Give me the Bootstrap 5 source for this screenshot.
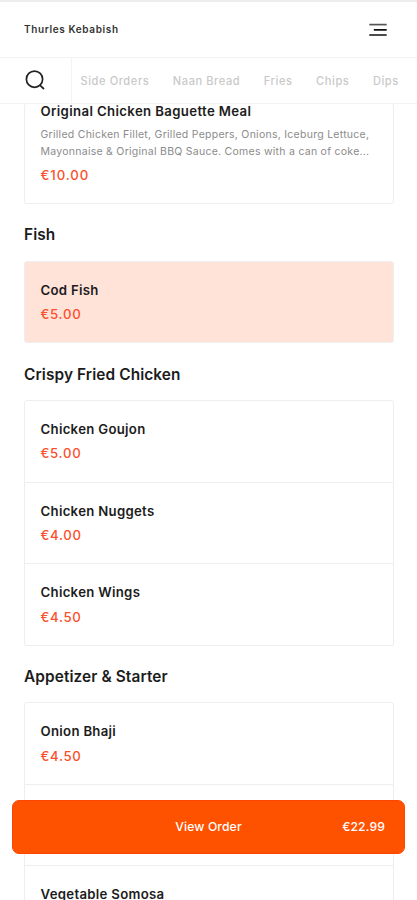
<!DOCTYPE html>
<html lang="en">
<head>
<meta charset="utf-8">
<meta name="viewport" content="width=device-width, initial-scale=1">
<title>Thurles Kebabish</title>
<link href="https://cdn.jsdelivr.net/npm/bootstrap@5.3.0/dist/css/bootstrap.min.css" rel="stylesheet">
<style>
  body { font-family: Inter, "Liberation Sans", sans-serif; color: #1c1c1c; background: #fff; }
  .top-bar { height: 58px; padding: 0 30px 0 24px; border-top: 2px solid #ededed; border-bottom: 1px solid #f3f3f3; }
  .shop-name { font-size: 10px; font-weight: 600; letter-spacing: .63px; color: #333; }
  .menu-toggle { line-height: 0; }
  .category-bar { height: 46px; border-bottom: 1px solid #f3f3f3; }
  .search-cell { width: 72px; border-right: 1px solid #f3f3f3; padding-left: 25px; }
  .category-links { font-size: 11.1px; font-weight: 500; letter-spacing: .57px; gap: 23.5px; padding: 2px 0 0 8.5px; }
  .category-links a { color: #c9c9c9; }
  .menu-scroll { padding: 0 23px 0 24px; }
  .section-title { font-size: 15.4px; font-weight: 600; line-height: 20px; letter-spacing: .1px; margin: 21.1px 0 15.5px; }
  .menu-list { --bs-list-group-border-color: #eeeeee; --bs-list-group-border-radius: 3px; --bs-list-group-color: #1c1c1c; }
  .dish { height: 81.6px; padding: 18px 16px 0 15.5px; }
  .dish:first-child { height: 82.5px; }
  .dish-name { font-size: 13.2px; font-weight: 600; line-height: 20px; letter-spacing: .3px; }
  .dish-price { font-size: 13.2px; font-weight: 500; line-height: 20px; letter-spacing: .7px; margin-top: 4.4px; color: #fb4f2c; }
  .dish-info { font-size: 10.5px; line-height: 16.5px; letter-spacing: .265px; color: #8b8b8b; margin-top: 6px; }
  .dish.dish-partial { height: 101.4px; padding-top: 0; margin-top: -1px; }
  .dish-partial .dish-name { margin-top: -3px; letter-spacing: .37px; }
  .dish-partial .dish-price { margin-top: 5px; letter-spacing: .9px; }
  .dish-chosen { background: #ffe3d9; }
  .order-bar { margin: 0 12px 46.5px; height: 54px; }
  .order-btn { --bs-btn-bg: #ff5200; --bs-btn-border-color: #ff4600; --bs-btn-color: #fff; --bs-btn-hover-bg: #f04c00; --bs-btn-hover-color: #fff;
    --bs-btn-font-size: 12.2px; --bs-btn-font-weight: 500; --bs-btn-border-radius: 7px; --bs-btn-padding-x: 19px; padding-top: 8px; letter-spacing: .12px; }
</style>
<script src="https://cdn.jsdelivr.net/npm/bootstrap@5.3.0/dist/js/bootstrap.bundle.min.js" defer></script>
</head>
<body>
<div class="d-flex flex-column vh-100 overflow-hidden">
  <header class="top-bar d-flex align-items-center justify-content-between flex-shrink-0">
    <span class="shop-name">Thurles Kebabish</span>
    <button class="menu-toggle btn p-0 border-0" type="button" aria-label="Menu">
      <svg width="18" height="14" viewBox="0 0 18 14" fill="none" stroke="#111" stroke-width="1.7"><path stroke="#555" d="M.3 1.6h17.4"/><path d="M4.8 6.8h12.9M.3 12h17.4"/></svg>
    </button>
  </header>
  <nav class="category-bar d-flex flex-shrink-0">
    <div class="search-cell d-flex align-items-center flex-shrink-0">
      <svg width="22" height="22" viewBox="0 0 22 22" fill="none" stroke="#222" stroke-width="1.7"><circle cx="9.5" cy="9.2" r="8.1"/><path d="M14.8 15.2l4.2 3.8"/></svg>
    </div>
    <div class="category-links d-flex align-items-center text-nowrap">
      <a class="text-decoration-none" href="#">Side Orders</a>
      <a class="text-decoration-none" href="#">Naan Bread</a>
      <a class="text-decoration-none" href="#">Fries</a>
      <a class="text-decoration-none" href="#">Chips</a>
      <a class="text-decoration-none" href="#">Dips</a>
    </div>
  </nav>
  <main class="menu-scroll flex-grow-1 overflow-hidden">
    <div class="menu-list list-group">
      <div class="dish dish-partial list-group-item">
        <div class="dish-name">Original Chicken Baguette Meal</div>
        <div class="dish-info text-nowrap">Grilled Chicken Fillet, Grilled Peppers, Onions, Iceburg Lettuce,<br>Mayonnaise &amp; Original BBQ Sauce. Comes with a can of coke...</div>
        <div class="dish-price">€10.00</div>
      </div>
    </div>

    <h2 class="section-title">Fish</h2>
    <div class="menu-list list-group">
      <div class="dish dish-chosen list-group-item"><div class="dish-name">Cod Fish</div><div class="dish-price">€5.00</div></div>
    </div>

    <h2 class="section-title">Crispy Fried Chicken</h2>
    <div class="menu-list list-group">
      <div class="dish list-group-item"><div class="dish-name">Chicken Goujon</div><div class="dish-price">€5.00</div></div>
      <div class="dish list-group-item"><div class="dish-name">Chicken Nuggets</div><div class="dish-price">€4.00</div></div>
      <div class="dish list-group-item"><div class="dish-name">Chicken Wings</div><div class="dish-price">€4.50</div></div>
    </div>

    <h2 class="section-title">Appetizer &amp; Starter</h2>
    <div class="menu-list list-group">
      <div class="dish list-group-item"><div class="dish-name">Onion Bhaji</div><div class="dish-price">€4.50</div></div>
      <div class="dish list-group-item"></div>
      <div class="dish list-group-item"><div class="dish-name">Vegetable Somosa</div></div>
    </div>
  </main>
</div>
<div class="order-bar fixed-bottom">
  <button class="order-btn btn w-100 h-100 d-flex align-items-center" type="button">
    <span class="col"></span>
    <span class="col-auto">View Order</span>
    <span class="col text-end">€22.99</span>
  </button>
</div>
</body>
</html>
